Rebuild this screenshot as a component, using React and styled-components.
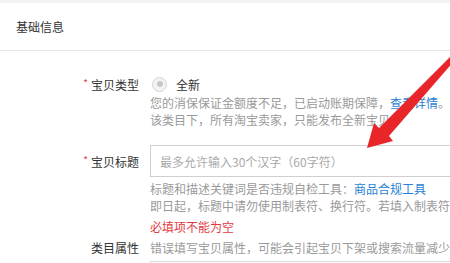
import React from 'react';
import styled, { createGlobalStyle } from 'styled-components';

const GlobalStyle = createGlobalStyle`
  body {
    margin: 0;
    background: #fff;
    font-family: "Noto Sans CJK SC", "Liberation Sans", sans-serif;
    text-spacing-trim: space-all;
  }
`

const Page = styled.div`
  position: relative;
  width: 450px;
  height: 263px;
  overflow: hidden;
  background: #fff;
  font-size: 12px;
  color: #333;
`

const TopStrip = styled.div`
  height: 3px;
  background: #f2f2f2;
`

const Header = styled.div`
  height: 47px;
  display: flex;
  align-items: center;
  padding-left: 16px;
  border-bottom: 1px solid #e6e6e6;
  color: #333;
`

const Form = styled.div`
  padding-top: 23px;
  display: flex;
  flex-direction: column;
`

const Row = styled.div`
  display: grid;
  grid-template-columns: 139px 1fr;
  column-gap: 11px;
  margin-top: ${p => p.gap || 0}px;
`

const Label = styled.div`
  display: flex;
  align-items: center;
  justify-content: flex-end;
  height: ${p => p.h || 20}px;
  white-space: nowrap;
  color: #333;
`

const Star = styled.span`
  color: #e5383f;
  font-size: 10px;
  margin-right: 3px;
  position: relative;
  top: -2px;
`

const Field = styled.div`
  display: flex;
  flex-direction: column;
  min-width: 0;
`

const RadioLine = styled.div`
  display: flex;
  align-items: center;
  height: 20px;
  gap: 9px;
  padding-left: 2px;
`

const Radio = styled.span`
  width: 13px;
  height: 13px;
  border-radius: 50%;
  border: 1px solid #d4d4d4;
  background: #f3f3f3;
  display: flex;
  align-items: center;
  justify-content: center;
  &::after {
    content: '';
    width: 6px;
    height: 6px;
    border-radius: 50%;
    background: #c8c8c8;
  }
`

const Hint = styled.div`
  color: #9a9a9a;
  line-height: 17px;
  white-space: nowrap;
  margin-top: ${p => p.gap || 0}px;
`

const Error = styled.div`
  color: #e5383f;
  line-height: 17px;
  white-space: nowrap;
  margin-top: 4px;
`

const Link = styled.a`
  color: #2a7fd4;
  text-decoration: none;
`

const Input = styled.div`
  height: 30px;
  border: 1px solid #cfcfcf;
  border-right: none;
  display: flex;
  align-items: center;
  padding-left: 9px;
  color: #aaa;
  white-space: nowrap;
`

const BottomInput = styled.div`
  height: 20px;
  margin-top: 5px;
  border-top: 1px solid #dcdcdc;
  border-left: 1px solid #dcdcdc;
`

const Arrow = styled.svg`
  position: absolute;
  left: 0;
  top: 0;
  pointer-events: none;
`

export default function App() {
  return (
    <Page>
      <GlobalStyle />
      <TopStrip />
      <Header>基础信息</Header>
      <Form>
        <Row>
          <Label><Star>*</Star>宝贝类型</Label>
          <Field>
            <RadioLine>
              <Radio />
              <span>全新</span>
            </RadioLine>
            <Hint>您的消保保证金额度不足，已启动账期保障，<Link>查看详情</Link>。</Hint>
            <Hint>该类目下，所有淘宝卖家，只能发布全新宝贝。</Hint>
          </Field>
        </Row>
        <Row gap={17}>
          <Label h={32}><Star>*</Star>宝贝标题</Label>
          <Field>
            <Input>最多允许输入30个汉字（60字符）</Input>
            <Hint gap={3}>标题和描述关键词是否违规自检工具：<Link>商品合规工具</Link></Hint>
            <Hint>即日起，标题中请勿使用制表符、换行符。若填入制表符</Hint>
            <Error>必填项不能为空</Error>
          </Field>
        </Row>
        <Row gap={4}>
          <Label h={17}>类目属性</Label>
          <Field>
            <Hint>错误填写宝贝属性，可能会引起宝贝下架或搜索流量减少</Hint>
            <BottomInput />
          </Field>
        </Row>
      </Form>
      <Arrow width="450" height="263" viewBox="0 0 450 263">
        <path
          d="M451 56 L455 60 L389 136 L393 141 L367 148 L374 123 L379 128 Z"
          fill="#e8262a"
        />
      </Arrow>
    </Page>
  );
}
